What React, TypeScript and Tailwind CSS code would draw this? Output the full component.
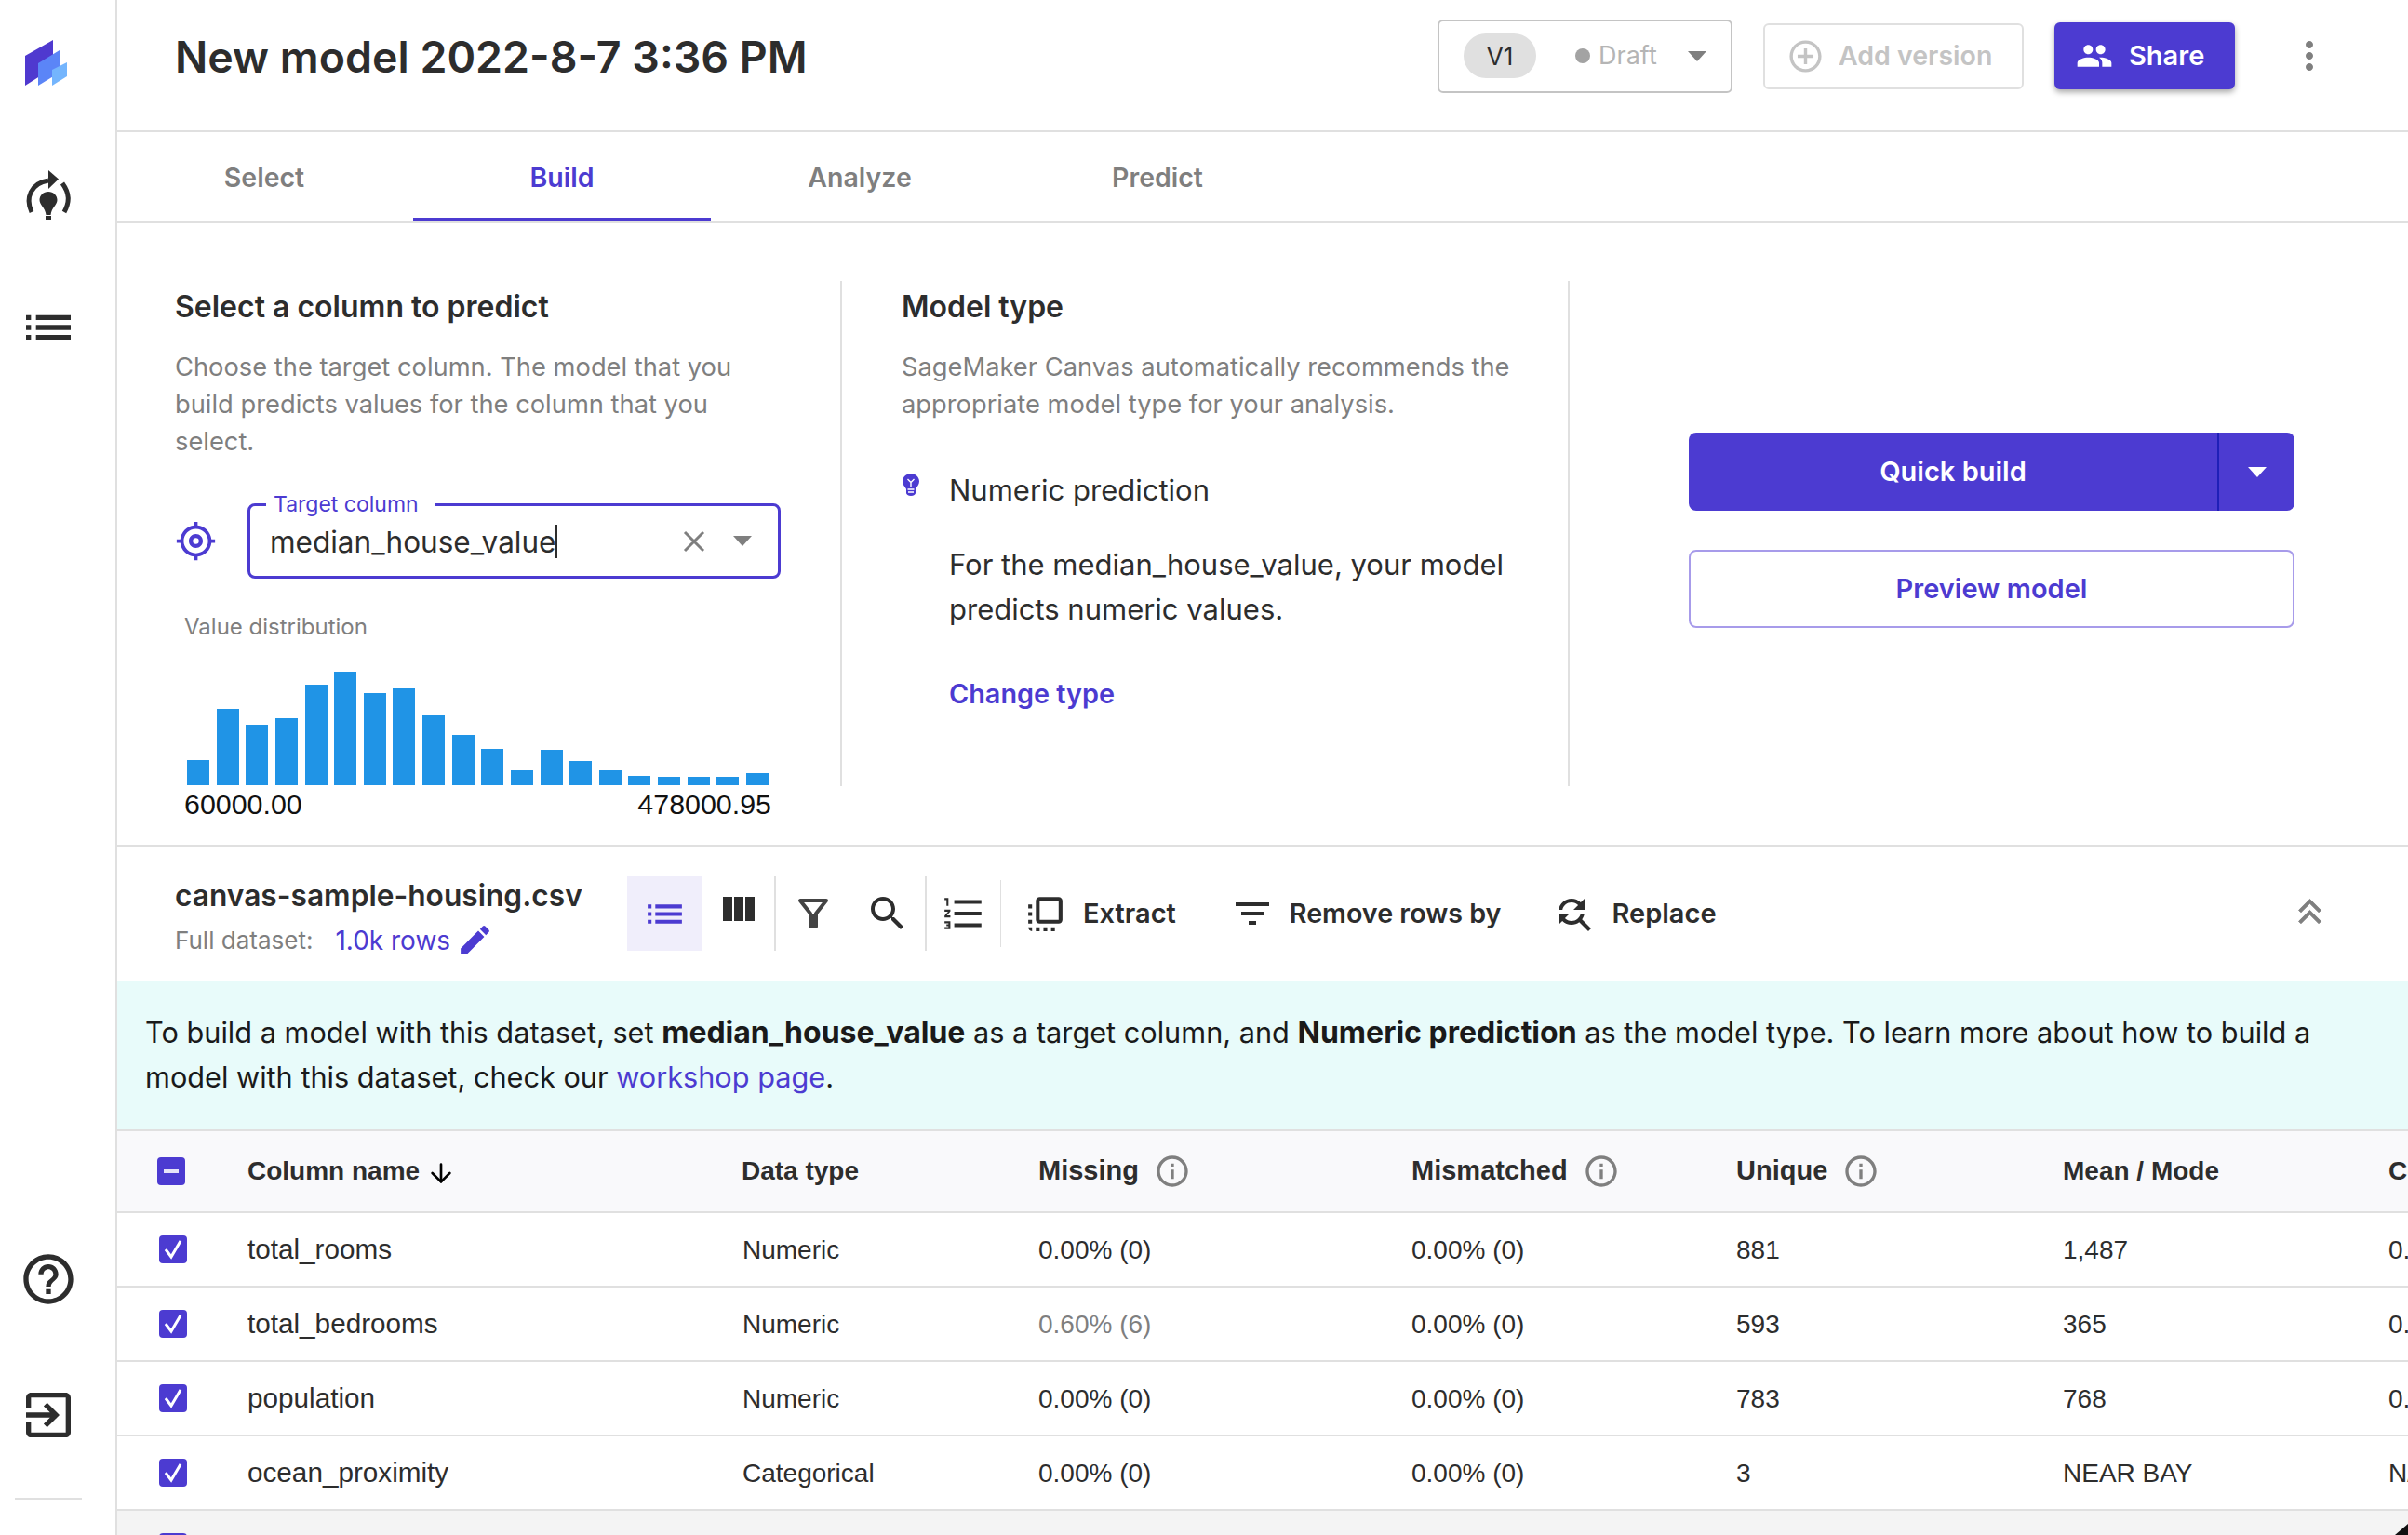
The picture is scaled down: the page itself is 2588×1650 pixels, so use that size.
import { ArrowDown } from "lucide-react";

const BARS = [27, 82, 65, 72, 108, 122, 99, 104, 75, 54, 39, 16, 38, 26, 16, 10, 9, 9, 9, 13];

const ROWS = [
  { name: "total_rooms", type: "Numeric", missing: "0.00% (0)", mismatched: "0.00% (0)", unique: "881", mean: "1,487", last: "0.134" },
  { name: "total_bedrooms", type: "Numeric", missing: "0.60% (6)", mismatched: "0.00% (0)", unique: "593", mean: "365", last: "0.049", dim: true },
  { name: "population", type: "Numeric", missing: "0.00% (0)", mismatched: "0.00% (0)", unique: "783", mean: "768", last: "0.025" },
  { name: "ocean_proximity", type: "Categorical", missing: "0.00% (0)", mismatched: "0.00% (0)", unique: "3", mean: "NEAR BAY", last: "N/A" },
];

function Icon({ d, size, className }: { d: string; size: number; className?: string }) {
  return (
    <svg width={size} height={size} viewBox="0 0 24 24" fill="currentColor" className={"shrink-0 " + (className ?? "")}>
      <path d={d} />
    </svg>
  );
}

const LIST = "M3 13h2v-2H3v2zm0 4h2v-2H3v2zm0-8h2V7H3v2zm4 4h14v-2H7v2zm0 4h14v-2H7v2zM7 7v2h14V7H7z";
const INFO = "M11 7h2v2h-2zm0 4h2v6h-2zm1-9C6.48 2 2 6.48 2 12s4.48 10 10 10 10-4.48 10-10S17.52 2 12 2zm0 18c-4.41 0-8-3.59-8-8s3.59-8 8-8 8 3.59 8 8-3.59 8-8 8z";

function Caret({ className }: { className: string }) {
  return <span className={"shrink-0 border-x-[10px] border-t-[11px] border-x-transparent " + className} />;
}

function Checkbox({ dash }: { dash?: boolean }) {
  return (
    <span className="flex h-[30px] w-[30px] items-center justify-center rounded-[4px] bg-[#4c3bd1]">
      {dash ? (
        <span className="h-[4px] w-[16px] bg-[#e6e3f8]" />
      ) : (
        <svg width="24" height="30" viewBox="0 0 24 30" fill="none" stroke="white" strokeWidth="3">
          <path d="M4 15l6 8L20 6" />
        </svg>
      )}
    </span>
  );
}

function Sidebar() {
  return (
    <div className="flex h-full w-[126px] shrink-0 flex-col items-center border-r-2 border-[#e0e0e0] pr-[20px] text-[#2d2d2d]">
      <svg width="45" height="49" viewBox="0 0 45 49" className="mt-[43px] mr-[5px]">
        <path d="M0 17L30 0V30L0 49z" fill="#4f39cf" />
        <path d="M14 25L37 11V35L14 49z" fill="#5b85f7" />
        <path d="M29 32L45 24V39L29 49z" fill="#74b5fd" />
      </svg>
      <svg width="48" height="53" viewBox="0 0 48 53" className="mt-[91px]">
        <path d="M6 45C-1 30 5 14 24 11" fill="none" stroke="currentColor" strokeWidth="5" />
        <path d="M24 0l11 9.5L24 20z" fill="currentColor" />
        <path d="M39 14C47 25 47 34 41 45" fill="none" stroke="currentColor" strokeWidth="5" />
        <path d="M24 23c5.5 0 9.5 4 9.5 9 0 5-6 8-7 16h-5c-1-8-7-11-7-16 0-5 4-9 9.500-9z" fill="currentColor" />
        <rect x="21" y="49" width="6" height="4" fill="currentColor" />
      </svg>
      <Icon d={LIST} size={64} className="mt-[84px]" />
      <Icon d="M11 18h2v-2h-2v2zm1-16C6.48 2 2 6.48 2 12s4.48 10 10 10 10-4.48 10-10S17.52 2 12 2zm0 18c-4.41 0-8-3.59-8-8s3.59-8 8-8 8 3.59 8 8-3.59 8-8 8zm0-14c-2.21 0-4 1.79-4 4h2c0-1.1.9-2 2-2s2 .9 2 2c0 2-3 1.75-3 5h2c0-2.25 3-2.5 3-5 0-2.21-1.79-4-4-4z" size={64} className="mt-auto" />
      <Icon d="M10.09 15.59L11.5 17l5-5-5-5-1.41 1.41L12.67 11H3v2h9.67l-2.58 2.59zM19 3H5c-1.11 0-2 .9-2 2v4h2V5h14v14H5v-4H3v4c0 1.1.89 2 2 2h14c1.1 0 2-.9 2-2V5c0-1.1-.9-2-2-2z" size={64} className="mt-[82px]" />
      <div className="mt-[57px] mb-[38px] h-[2px] w-[72px] bg-[#e0e0e0]" />
    </div>
  );
}

function Header() {
  return (
    <div className="flex h-[142px] shrink-0 items-center border-b-2 border-[#e0e0e0] pb-[20px] pl-[62px]">
      <h1 className="mt-[3px] text-[46.5px] font-semibold text-[#2d2d2d]">New model 2022-8-7 3:36 PM</h1>
      <div className="ml-auto flex items-center">
        <div className="flex h-[79px] w-[317px] items-center rounded-[6px] border-2 border-[#c4c4c4] pl-[26px]">
          <span className="flex h-[48px] w-[78px] items-center justify-center rounded-full bg-[#e0e0e0] text-[26px] text-[#2d2d2d]">V1</span>
          <span className="ml-[42px] h-[16px] w-[16px] rounded-full bg-[#a3a3a3]" />
          <span className="ml-[9px] text-[27px] text-[#b5b5b5]">Draft</span>
          <Caret className="ml-[33px] border-t-[#7f7f7f]" />
        </div>
        <div className="ml-[33px] flex h-[71px] w-[280px] items-center gap-[15px] rounded-[6px] border-2 border-[#e0e0e0] pl-[23px] text-[#c4c4c4]">
          <Icon d="M13 7h-2v4H7v2h4v4h2v-4h4v-2h-4V7zm-1-5C6.48 2 2 6.48 2 12s4.48 10 10 10 10-4.48 10-10S17.52 2 12 2zm0 18c-4.41 0-8-3.59-8-8s3.59-8 8-8 8 3.59 8 8-3.59 8-8 8z" size={41} />
          <span className="text-[28.5px] font-semibold">Add version</span>
        </div>
        <div className="ml-[33px] flex h-[72px] w-[194px] items-center gap-[17px] rounded-[6px] bg-[#4c3bd1] pl-[23px] text-white shadow-[0_3px_6px_rgba(0,0,0,0.35)]">
          <Icon d="M16 11c1.66 0 2.99-1.34 2.99-3S17.66 5 16 5c-1.66 0-3 1.34-3 3s1.34 3 3 3zm-8 0c1.66 0 2.99-1.34 2.99-3S9.66 5 8 5C6.34 5 5 6.34 5 8s1.34 3 3 3zm0 2c-2.33 0-7 1.17-7 3.5V19h14v-2.5c0-2.33-4.67-3.5-7-3.5zm8 0c-.29 0-.62.02-.97.05 1.16.84 1.97 1.97 1.97 3.45V19h6v-2.5c0-2.33-4.67-3.5-7-3.5z" size={40} />
          <span className="text-[29px] font-semibold">Share</span>
        </div>
        <Icon d="M12 8c1.1 0 2-.9 2-2s-.9-2-2-2-2 .9-2 2 .9 2 2 2zm0 2c-1.1 0-2 .9-2 2s.9 2 2 2 2-.9 2-2-.9-2-2-2zm0 6c-1.1 0-2 .9-2 2s.9 2 2 2 2-.9 2-2-.9-2-2-2z" size={48} className="mr-[82px] ml-[56px] text-[#7f7f7f]" />
      </div>
    </div>
  );
}

function Tabs() {
  return (
    <div className="h-[98px] shrink-0 border-b-2 border-[#e0e0e0]">
      <div className="-ml-[2px] flex">
        {["Select", "Build", "Analyze", "Predict"].map((t) => (
          <div
            key={t}
            className={
              t === "Build"
                ? "flex h-[96px] w-[320px] items-center justify-center border-b-4 border-[#4c3bd1] pt-[6px] text-[28.500px] font-semibold text-[#4c3bd1]"
                : "flex h-[96px] w-[320px] items-center justify-center border-b-4 border-transparent pt-[6px] text-[28.500px] font-semibold text-[#7f7f7f]"
            }
          >
            {t}
          </div>
        ))}
      </div>
    </div>
  );
}

function ColumnPicker() {
  return (
    <div className="h-[543px] w-[779px] shrink-0 border-r-2 border-[#e0e0e0] pl-[62px]">
      <h2 className="mt-[8px] text-[32px] leading-[40px] font-semibold text-[#2d2d2d]">Select a column to predict</h2>
      <p className="mt-[25px] text-[27.300px] leading-[40px] text-[#7f7f7f]">
        Choose the target column. The model that you
        <br />
        build predicts values for the column that you
        <br />
        select.
      </p>
      <div className="mt-[46px] flex items-center">
        <svg width="45" height="45" viewBox="0 0 24 24" fill="#4c3bd1" className="shrink-0">
          <path d="M12 8c-2.210 0-4 1.790-4 4s1.790 4 4 4 4-1.790 4-4-1.790-4-4-4zm8.940 3c-.46-4.170-3.770-7.480-7.940-7.940V1h-2v2.060C6.830 3.520 3.520 6.830 3.060 11H1v2h2.060c.46 4.170 3.770 7.480 7.940 7.940V23h2v-2.060c4.170-.46 7.480-3.770 7.940-7.940H23v-2h-2.060zM12 19c-3.870 0-7-3.130-7-7s3.130-7 7-7 7 3.130 7 7-3.130 7-7 7z" />
          <circle cx="12" cy="12" r="1.700" fill="white" />
        </svg>
        <div className="relative ml-[33px] flex h-[81px] w-[573px] items-center rounded-[8px] border-[3px] border-[#4c3bd1] pr-[28px] pl-[21px]">
          <span className="absolute -top-[16px] left-[17px] bg-white pr-[18px] pl-[8px] text-[23px] leading-[28px] text-[#4c3bd1]">Target column</span>
          <span className="mt-[2px] text-[31.500px] text-[#2d2d2d]">median_house_value</span>
          <span className="h-[36px] w-[2px] bg-[#2d2d2d]" />
          <svg width="24" height="24" viewBox="0 0 24 24" stroke="#7f7f7f" strokeWidth="3" className="ml-auto shrink-0">
            <path d="M2 2l20 20M22 2L2 22" />
          </svg>
          <Caret className="ml-[30px] border-t-[#7f7f7f]" />
        </div>
      </div>
      <div className="mt-[37px] ml-[10px] text-[24px] leading-[30px] text-[#7f7f7f]">Value distribution</div>
      <div className="mt-[33px] ml-[13px] flex h-[122px] w-[625px] items-end justify-between">
        {BARS.map((h, i) => (
          <div key={i} className="w-[24px] bg-[#2094e6]" style={{ height: h }} />
        ))}
      </div>
      <div className="mt-[3px] ml-[10px] flex w-[631px] justify-between font-['Liberation_Sans',Arial,sans-serif] text-[30.400px] leading-[34px] text-[#111]">
        <span>60000.00</span>
        <span>478000.95</span>
      </div>
    </div>
  );
}

function ModelType() {
  return (
    <div className="h-[543px] w-[782px] shrink-0 border-r-2 border-[#e0e0e0] pl-[64px]">
      <h2 className="mt-[8px] text-[32px] leading-[40px] font-semibold text-[#2d2d2d]">Model type</h2>
      <p className="mt-[25px] text-[27.300px] leading-[40px] text-[#7f7f7f]">
        SageMaker Canvas automatically recommends the
        <br />
        appropriate model type for your analysis.
      </p>
      <div className="mt-[48px] flex">
        <svg width="18" height="24" viewBox="0 0 18 24" className="mt-[6px] ml-[1px] shrink-0">
          <path d="M9 0c5 0 9 3.800 9 8.600 0 3.500-2.300 5.400-3.600 7.400-.5.800-.4 1.400-.4 2.500v2.500c0 1.500-2 3-5 3s-5-1.500-5-3v-2.500c0-1.100.1-1.700-.4-2.500C2.300 14 0 12.100 0 8.600 0 3.800 4 0 9 0z" fill="#4c3bd1" />
          <path d="M5.500 6l3.500 3.500L12.500 6M9 9.500V14M5.500 17h7M6 20h6" fill="none" stroke="white" strokeWidth="1.400" />
        </svg>
        <div className="ml-[32px] text-[31px] leading-[48px] text-[#2d2d2d]">
          <div>Numeric prediction</div>
          <p className="mt-[32px]">
            For the median_house_value, your model
            <br />
            predicts numeric values.
          </p>
          <div className="mt-[47px] text-[28.800px] leading-[40px] font-semibold text-[#4c3bd1]">Change type</div>
        </div>
      </div>
    </div>
  );
}

function BuildActions() {
  return (
    <div className="w-[651px] shrink-0 pt-[163px]">
      <div className="flex h-[84px] items-center rounded-[8px] bg-[#4c3bd1] text-white">
        <span className="flex h-full w-[570px] items-center justify-center border-r-2 border-[#1f1fb8] text-[29px] font-semibold">Quick build</span>
        <Caret className="ml-[31px] border-t-white" />
      </div>
      <div className="mt-[42px] flex h-[84px] items-center justify-center rounded-[8px] border-2 border-[#a79bea] text-[29px] font-semibold text-[#4c3bd1]">Preview model</div>
    </div>
  );
}

function Toolbar() {
  return (
    <div className="flex h-[144px] shrink-0 items-start pl-[62px] text-[#2d2d2d]">
      <div className="mt-[31px] w-[486px] shrink-0">
        <div className="text-[31.700px] leading-[44px] font-semibold">canvas-sample-housing.csv</div>
        <div className="mt-[5px] flex items-center text-[26px] leading-[40px] text-[#7f7f7f]">
          <span>Full dataset:</span>
          <span className="ml-[24px] text-[28px] text-[#4c3bd1]">1.0k rows</span>
          <Icon d="M3 17.25V21h3.750L17.810 9.940l-3.750-3.750L3 17.250zM20.710 7.040c.39-.39.39-1.020 0-1.410l-2.340-2.340c-.39-.39-1.020-.39-1.410 0l-1.830 1.830 3.750 3.750 1.830-1.830z" size={41} className="ml-[6px] text-[#4c3bd1]" />
        </div>
      </div>
      <div className="mt-[32px] flex h-[80px] items-center">
        <div className="flex h-[80px] w-[80px] items-center justify-center bg-[#f0eefb] text-[#4c3bd1]">
          <Icon d={LIST} size={49} />
        </div>
        <div className="flex h-[80px] w-[80px] items-center justify-center border-r-2 border-[#e0e0e0]">
          <Icon d="M10 18h5V5h-5v13zm-6 0h5V5H4v13zM16 5v13h5V5h-5z" size={48} className="-mt-[8px]" />
        </div>
        <div className="flex h-[80px] w-[80px] items-center justify-center">
          <svg width="34" height="33" viewBox="0 0 34 33" fill="none" stroke="#444" strokeWidth="4">
            <path d="M3 2h28L20 16v14h-6V16z" strokeLinejoin="round" />
            <path d="M17 17v14" strokeWidth="5" />
          </svg>
        </div>
        <div className="flex h-[80px] w-[80px] items-center justify-center">
          <Icon d="M15.500 14h-.79l-.28-.27C15.410 12.590 16 11.110 16 9.500 16 5.910 13.090 3 9.500 3S3 5.910 3 9.500 5.910 16 9.500 16c1.610 0 3.090-.59 4.230-1.570l.27.280v.79l5 4.990L20.490 19l-4.990-5zm-6 0C7.010 14 5 11.990 5 9.500S7.010 5 9.500 5 14 7.010 14 9.500 11.990 14 9.500 14z" size={48} />
        </div>
        <div className="flex h-[80px] w-[2px] bg-[#e0e0e0]" />
        <div className="flex h-[80px] w-[80px] items-center justify-center">
          <Icon d="M2 17h2v.5H3v1h1v.5H2v1h3v-4H2v1zm1-9h1V4H2v1h1v3zm-1 3h1.800L2 13.100v.9h3v-1H3.200L5 10.900V10H2v1zm5-6v2h14V5H7zm0 14h14v-2H7v2zm0-6h14v-2H7v2z" size={50} />
        </div>
        <div className="-ml-[1px] h-[72px] w-[1px] bg-[#e0e0e0]" />
        <Icon d="M3 13h2v-2H3v2zm0 4h2v-2H3v2zm2 4v-2H3c0 1.100.89 2 2 2zM3 9h2V7H3v2zm12 12h2v-2h-2v2zm4-18H9c-1.110 0-2 .9-2 2v10c0 1.100.89 2 2 2h10c1.100 0 2-.9 2-2V5c0-1.100-.9-2-2-2zm0 12H9V5h10v10zm-8 6h2v-2h-2v2zm-4 0h2v-2H7v2z" size={49} className="ml-[23px]" />
        <span className="ml-[16px] text-[29px] font-semibold">Extract</span>
        <Icon d="M10 18h4v-2h-4v2zM3 6v2h18V6H3zm3 7h12v-2H6v2z" size={48} className="ml-[58px]" />
        <span className="ml-[16px] text-[28.700px] font-semibold">Remove rows by</span>
        <Icon d="M11 6c1.380 0 2.630.56 3.540 1.460L12 10h6V4l-2.050 2.050C14.680 4.780 12.930 4 11 4c-3.530 0-6.430 2.610-6.920 6H6.100c.46-2.280 2.480-4 4.900-4zm5.640 9.140c.66-.9 1.120-1.970 1.280-3.140H15.900c-.46 2.280-2.480 4-4.900 4-1.380 0-2.630-.56-3.540-1.460L10 12H4v6l2.050-2.050C7.320 17.220 9.070 18 11 18c1.550 0 2.980-.51 4.140-1.360L20 21.490 21.490 20l-4.850-4.860z" size={48} className="ml-[54px]" />
        <span className="ml-[17px] text-[29px] font-semibold">Replace</span>
      </div>
      <div className="mt-[52px] mr-[85px] ml-auto text-[#7f7f7f]">
        <svg width="41" height="41" viewBox="0 0 24 24" fill="currentColor" stroke="currentColor" strokeWidth="0.5">
          <path d="M17.590 18 12 12.410 6.410 18 5 16.590l7-7 7 7zM17.590 11 12 5.410 6.410 11 5 9.590l7-7 7 7z" />
        </svg>
      </div>
    </div>
  );
}

function Banner() {
  return (
    <div className="h-[160px] shrink-0 bg-[#e8fbfa] pt-[32px] pl-[30px] text-[30.700px] leading-[48px] text-[#1a1a1a]">
      To build a model with this dataset, set <b className="text-[32px] font-bold">median_house_value</b> as a target column, and <b className="text-[32px] font-bold">Numeric prediction</b> as the model type. To learn more about how to build a
      <br />
      model with this dataset, check our <span className="text-[#4c3bd1]">workshop page</span>.
    </div>
  );
}

const GRID = "grid grid-cols-[140px_532px_318px_401px_349px_351px_350px_200px] items-center";

function HeaderCell({ label }: { label: string }) {
  return (
    <div className="flex items-center gap-[16px]">
      <span className="text-[29px]">{label}</span>
      <Icon d={INFO} size={40} className="text-[#7f7f7f]" />
    </div>
  );
}

function Table() {
  return (
    <div className="font-['Liberation_Sans',Arial,sans-serif] text-[28px] text-[#2d2d2d]">
      <div className={GRID + " h-[90px] border-y-2 border-[#e0e0e0] bg-[#f9f9fb] font-bold"}>
        <div className="ml-[43px] flex">
          <Checkbox dash />
        </div>
        <div className="flex items-center gap-[7px]">
          Column name
          <ArrowDown size={32} strokeWidth={2} className="mt-[3px] text-black" />
        </div>
        <div className="-ml-[1px]">Data type</div>
        <HeaderCell label="Missing" />
        <HeaderCell label="Mismatched" />
        <HeaderCell label="Unique" />
        <div>Mean / Mode</div>
        <div className="whitespace-nowrap">Correlation</div>
      </div>
      {ROWS.map((r) => (
        <div key={r.name} className={GRID + " h-[80px] border-b-2 border-[#e0e0e0] pt-[1px]"}>
          <div className="-mt-[2px] ml-[45px] flex">
            <Checkbox />
          </div>
          <div className="text-[29.700px]">{r.name}</div>
          <div>{r.type}</div>
          <div className={r.dim ? "text-[#7f7f7f]" : ""}>{r.missing}</div>
          <div>{r.mismatched}</div>
          <div>{r.unique}</div>
          <div>{r.mean}</div>
          <div>{r.last}</div>
        </div>
      ))}
      <div className="h-[80px] bg-[#f4f4f4] pt-[24px] pl-[45px]">
        <Checkbox />
      </div>
    </div>
  );
}

export default function App() {
  return (
    <div className="relative flex h-[1650px] w-[2588px] overflow-hidden bg-white font-[Inter,sans-serif]">
      <Sidebar />
      <div className="flex w-[2462px] flex-col">
        <Header />
        <Tabs />
        <div className="flex h-[670px] shrink-0 border-b-2 border-[#e0e0e0] pt-[62px]">
          <ColumnPicker />
          <ModelType />
          <div className="ml-[128px]">
            <BuildActions />
          </div>
        </div>
        <Toolbar />
        <Banner />
        <Table />
      </div>
      <svg width="14" height="12" viewBox="0 0 14 12" className="absolute right-0 bottom-0">
        <path d="M14 0v12H0z" fill="#111" />
      </svg>
    </div>
  );
}
